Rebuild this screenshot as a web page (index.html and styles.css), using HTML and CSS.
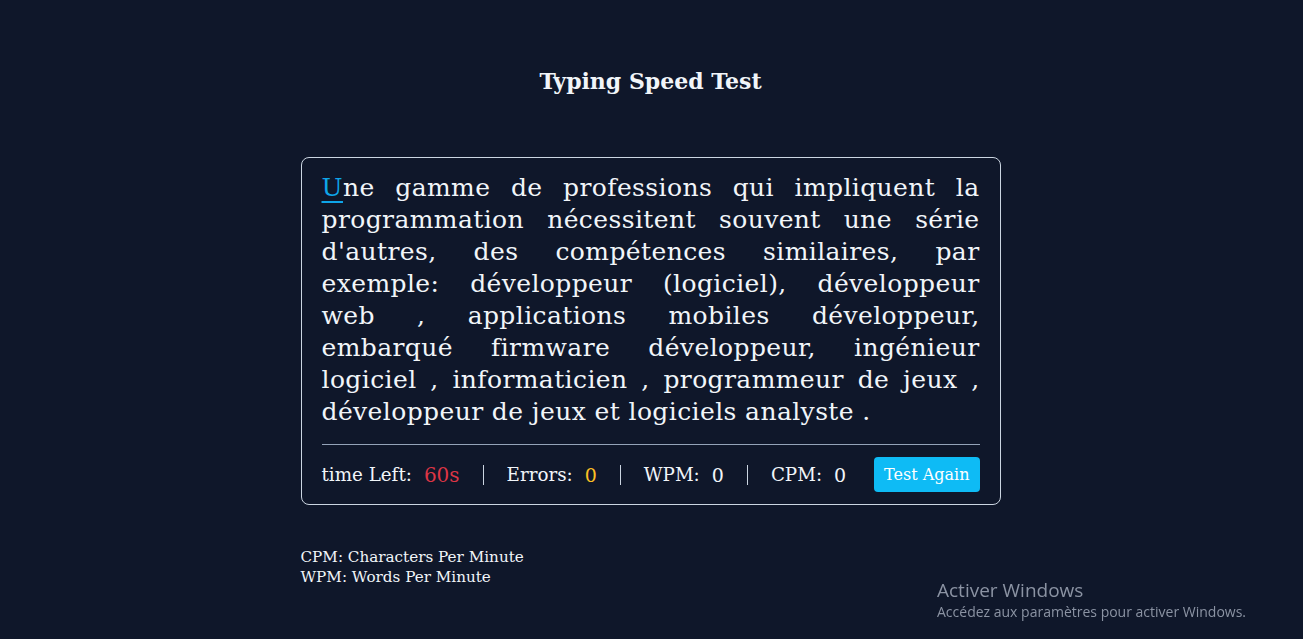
FILE: index.html
```html
<!DOCTYPE html>
<html lang="fr">
<head>
<meta charset="utf-8">
<title>Typing Speed Test</title>
<link rel="stylesheet" href="styles.css">
</head>
<body>
<main class="page">
  <h1 class="title">Typing Speed Test</h1>
  <section class="card">
    <p class="passage">
      <span class="line"><span class="current">U</span>ne gamme de professions qui impliquent la</span>
      <span class="line">programmation nécessitent souvent une série</span>
      <span class="line">d'autres, des compétences similaires, par</span>
      <span class="line">exemple: développeur (logiciel), développeur</span>
      <span class="line">web , applications mobiles développeur,</span>
      <span class="line">embarqué firmware développeur, ingénieur</span>
      <span class="line">logiciel , informaticien , programmeur de jeux ,</span>
      <span class="line last">développeur de jeux et logiciels analyste .</span>
    </p>
    <div class="stats">
      <div class="stat">time Left:<span class="val red">60s</span></div>
      <div class="sep"></div>
      <div class="stat">Errors:<span class="val yellow">0</span></div>
      <div class="sep"></div>
      <div class="stat">WPM:<span class="val">0</span></div>
      <div class="sep"></div>
      <div class="stat">CPM:<span class="val">0</span></div>
      <button class="btn">Test Again</button>
    </div>
  </section>
  <div class="legend">
    <div>CPM: Characters Per Minute</div>
    <div>WPM: Words Per Minute</div>
  </div>
</main>
<div class="watermark">
  <div class="wm-title">Activer Windows</div>
  <div class="wm-sub">Accédez aux paramètres pour activer Windows.</div>
</div>
</body>
</html>
```
FILE: styles.css
```css
* { box-sizing: border-box; }
html, body { margin: 0; height: 100%; }
body {
  background: #0f172a;
  color: #f1f5f9;
  font-family: "DejaVu Serif", "Liberation Serif", serif;
}
.page {
  width: 700px;
  margin: 0 auto;
  padding-top: 66px;
  position: relative;
  left: -1px;
}
.title {
  margin: 0;
  text-align: center;
  font-size: 22px;
  font-weight: bold;
  line-height: 30px;
}
.card {
  margin-top: 61px;
  border: 1px solid #cbd5e1;
  border-radius: 8px;
  padding: 14px 20px 12px 20px;
}
.passage {
  margin: 0;
  font-size: 25px;
  line-height: 32px;
  letter-spacing: 0.4px;
  color: #f1f5f9;
  padding-bottom: 16px;
  border-bottom: 1px solid #94a3b8;
}
.line {
  display: block;
  text-align: justify;
  text-align-last: justify;
  white-space: nowrap;
}
.line.last { text-align-last: left; }
.current {
  color: #0ea5e9;
  text-decoration: underline;
  text-decoration-color: #0ea5e9;
  text-underline-offset: 5px;
}
.stats {
  display: flex;
  align-items: center;
  margin-top: 12px;
  font-size: 18.3px;
}
.stat { display: flex; align-items: center; gap: 12px; white-space: nowrap; }
.val { font-size: 19px; }
.red { color: #dc3545; font-size: 20px; }
.yellow { color: #fbbf24; }
.sep {
  width: 1px;
  height: 20px;
  background: #cbd5e1;
  margin: 0 23px;
}
.btn {
  margin-left: auto;
  background: #0ebbf5;
  color: #fff;
  border: none;
  border-radius: 4px;
  height: 35px;
  padding: 0 10px;
  font-family: inherit;
  font-size: 16px;
}
.legend {
  margin-top: 42px;
  font-size: 15.2px;
  line-height: 20px;
}
.watermark {
  position: fixed;
  left: 937px;
  top: 578px;
  color: #8b93a3;
  font-family: "Open Sans", "Noto Sans", sans-serif;
}
.wm-title { font-size: 19px; line-height: 24px; }
.wm-sub { font-size: 14px; line-height: 20px; }
```
